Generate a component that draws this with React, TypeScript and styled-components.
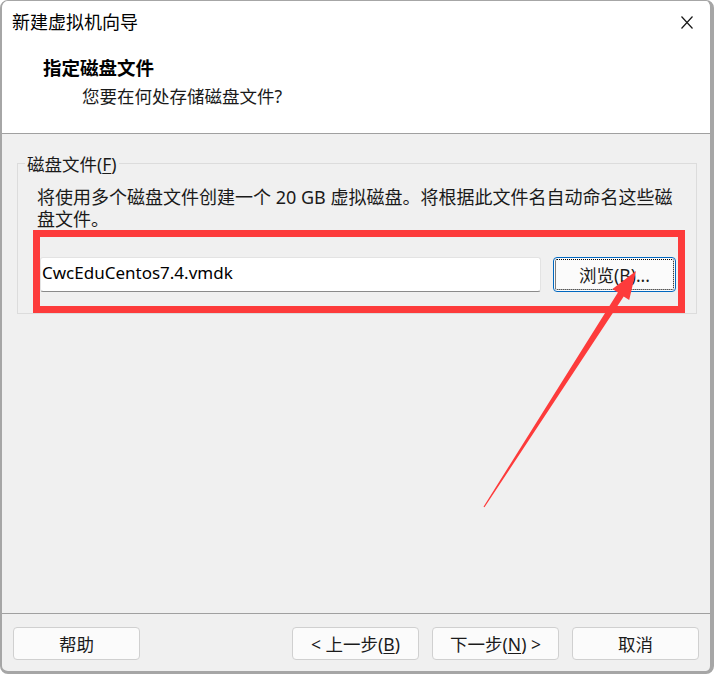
import React from "react";
import styled, { createGlobalStyle } from "styled-components";

const Global = createGlobalStyle`
  html, body { margin: 0; padding: 0; background: #ffffff; }
  body { font-family: "Noto Sans", "Noto Sans CJK SC", sans-serif; }
  * { box-sizing: border-box; }
`;

const FONT = `"Noto Sans", "Noto Sans CJK SC", sans-serif`;

const Window = styled.div`
  position: relative;
  width: 714px;
  height: 674px;
  display: flex;
  flex-direction: column;
  border-style: solid;
  border-color: #a6a6a6;
  border-width: 1px 4px 3px 2px;
  border-radius: 8px;
  overflow: hidden;
  background: #f0f0f0;
  font-family: ${FONT};
  color: #1a1a1a;
`;

const TitleBar = styled.div`
  height: 42px;
  flex: none;
  display: flex;
  align-items: center;
  justify-content: space-between;
  padding: 0 17px 0 10px;
  background: #ffffff;
`;

const TitleText = styled.span`
  font-size: 18px;
  line-height: 24px;
  color: #000;
`;

const CloseIcon = styled.svg`
  width: 12px;
  height: 13px;
  display: block;
`;

const Header = styled.div`
  height: 91px;
  flex: none;
  background: #ffffff;
  border-bottom: 1px solid #a0a0a0;
  padding: 13px 0 0 0;
  display: flex;
  flex-direction: column;
  gap: 4px;
`;

const Heading = styled.div`
  font-size: 18.5px;
  line-height: 24px;
  font-weight: 700;
  color: #000;
  padding-left: 41px;
`;

const SubHeading = styled.div`
  font-size: 17.5px;
  line-height: 24px;
  color: #1a1a1a;
  padding-left: 80px;
`;

const Body = styled.div`
  flex: 1;
  padding: 29px 13px 0 15px;
`;

const GroupBox = styled.div`
  border: 1px solid #dcdcdc;
  padding: 0 19px 21px 19px;
  display: flex;
  flex-direction: column;
`;

const GroupTitle = styled.span`
  align-self: flex-start;
  margin: -11px 0 0 -12px;
  padding: 0 2px;
  background: #f0f0f0;
  font-size: 17.5px;
  line-height: 22px;
  color: #1a1a1a;
`;

const Hotkey = styled.span`
  text-decoration: underline;
  text-underline-offset: 2px;
`;

const Description = styled.div`
  margin-top: 11px;
  font-size: 18px;
  line-height: 22px;
  white-space: nowrap;
  color: #1a1a1a;
`;

const PathRow = styled.div`
  margin: 27px 0 0 3px;
  display: flex;
  gap: 12px;
`;

const PathInput = styled.div`
  width: 501px;
  height: 35px;
  background: #ffffff;
  border: 1px solid #e3e3e3;
  border-bottom: 1px solid #8a8a8a;
  border-radius: 3px;
  padding: 0 0 4px 1px;
  display: flex;
  align-items: center;
  font-size: 17px;
  color: #000;
`;

const Button = styled.button<{ $w?: number; $focused?: boolean }>`
  width: ${(p) => p.$w ?? 127}px;
  height: ${(p) => (p.$focused ? 35 : 33)}px;
  flex: none;
  position: relative;
  background: #fbfbfb;
  border: 1px solid ${(p) => (p.$focused ? "#0067c0" : "#d0d0d0")};
  border-radius: 4px;
  font-family: ${FONT};
  font-size: 17.5px;
  line-height: 22px;
  color: #1b1b1b;
  padding: 0;
  display: flex;
  align-items: center;
  justify-content: center;
  ${(p) =>
    p.$focused
      ? `outline: 1px dotted #000; outline-offset: -3px;`
      : ``}
`;

const Footer = styled.div`
  height: 58px;
  flex: none;
  border-top: 1px solid #a0a0a0;
  padding: 13px 11px 0 11px;
  display: flex;
  justify-content: space-between;
  align-items: flex-start;
`;

const NavGroup = styled.div`
  display: flex;
  gap: 13px;
`;

const Overlay = styled.svg`
  position: absolute;
  left: -2px;
  top: -1px;
  width: 714px;
  height: 674px;
  pointer-events: none;
`;

export default function App() {
  const red = "#fd3b3b";
  return (
    <>
      <Global />
      <Window>
        <TitleBar>
          <TitleText>新建虚拟机向导</TitleText>
          <CloseIcon viewBox="0 0 12 13">
            <path d="M0.5 0.5 L11.5 12.5 M11.5 0.5 L0.5 12.5" stroke="#1a1a1a" strokeWidth="1.2" fill="none" />
          </CloseIcon>
        </TitleBar>
        <Header>
          <Heading>指定磁盘文件</Heading>
          <SubHeading>您要在何处存储磁盘文件?</SubHeading>
        </Header>
        <Body>
          <GroupBox>
            <GroupTitle>
              磁盘文件(<Hotkey>F</Hotkey>)
            </GroupTitle>
            <Description>
              将使用多个磁盘文件创建一个 20 GB 虚拟磁盘。将根据此文件名自动命名这些磁
              <br />
              盘文件。
            </Description>
            <PathRow>
              <PathInput>CwcEduCentos7.4.vmdk</PathInput>
              <Button $w={123} $focused>
                浏览(<Hotkey>B</Hotkey>)...
              </Button>
            </PathRow>
          </GroupBox>
        </Body>
        <Footer>
          <Button>帮助</Button>
          <NavGroup>
            <Button>
              &lt; 上一步(<Hotkey>B</Hotkey>)
            </Button>
            <Button>
              下一步(<Hotkey>N</Hotkey>) &gt;
            </Button>
            <Button>取消</Button>
          </NavGroup>
        </Footer>
        <Overlay viewBox="0 0 714 674">
          <rect x="36.5" y="233.5" width="645" height="76" fill="none" stroke={red} strokeWidth="7" />
          <polygon
            points="636,271 629.2,299.9 623.7,296.4 484.5,507.3 483.5,506.7 617.9,292.6 612.4,289.1"
            fill={red}
          />
        </Overlay>
      </Window>
    </>
  );
}
